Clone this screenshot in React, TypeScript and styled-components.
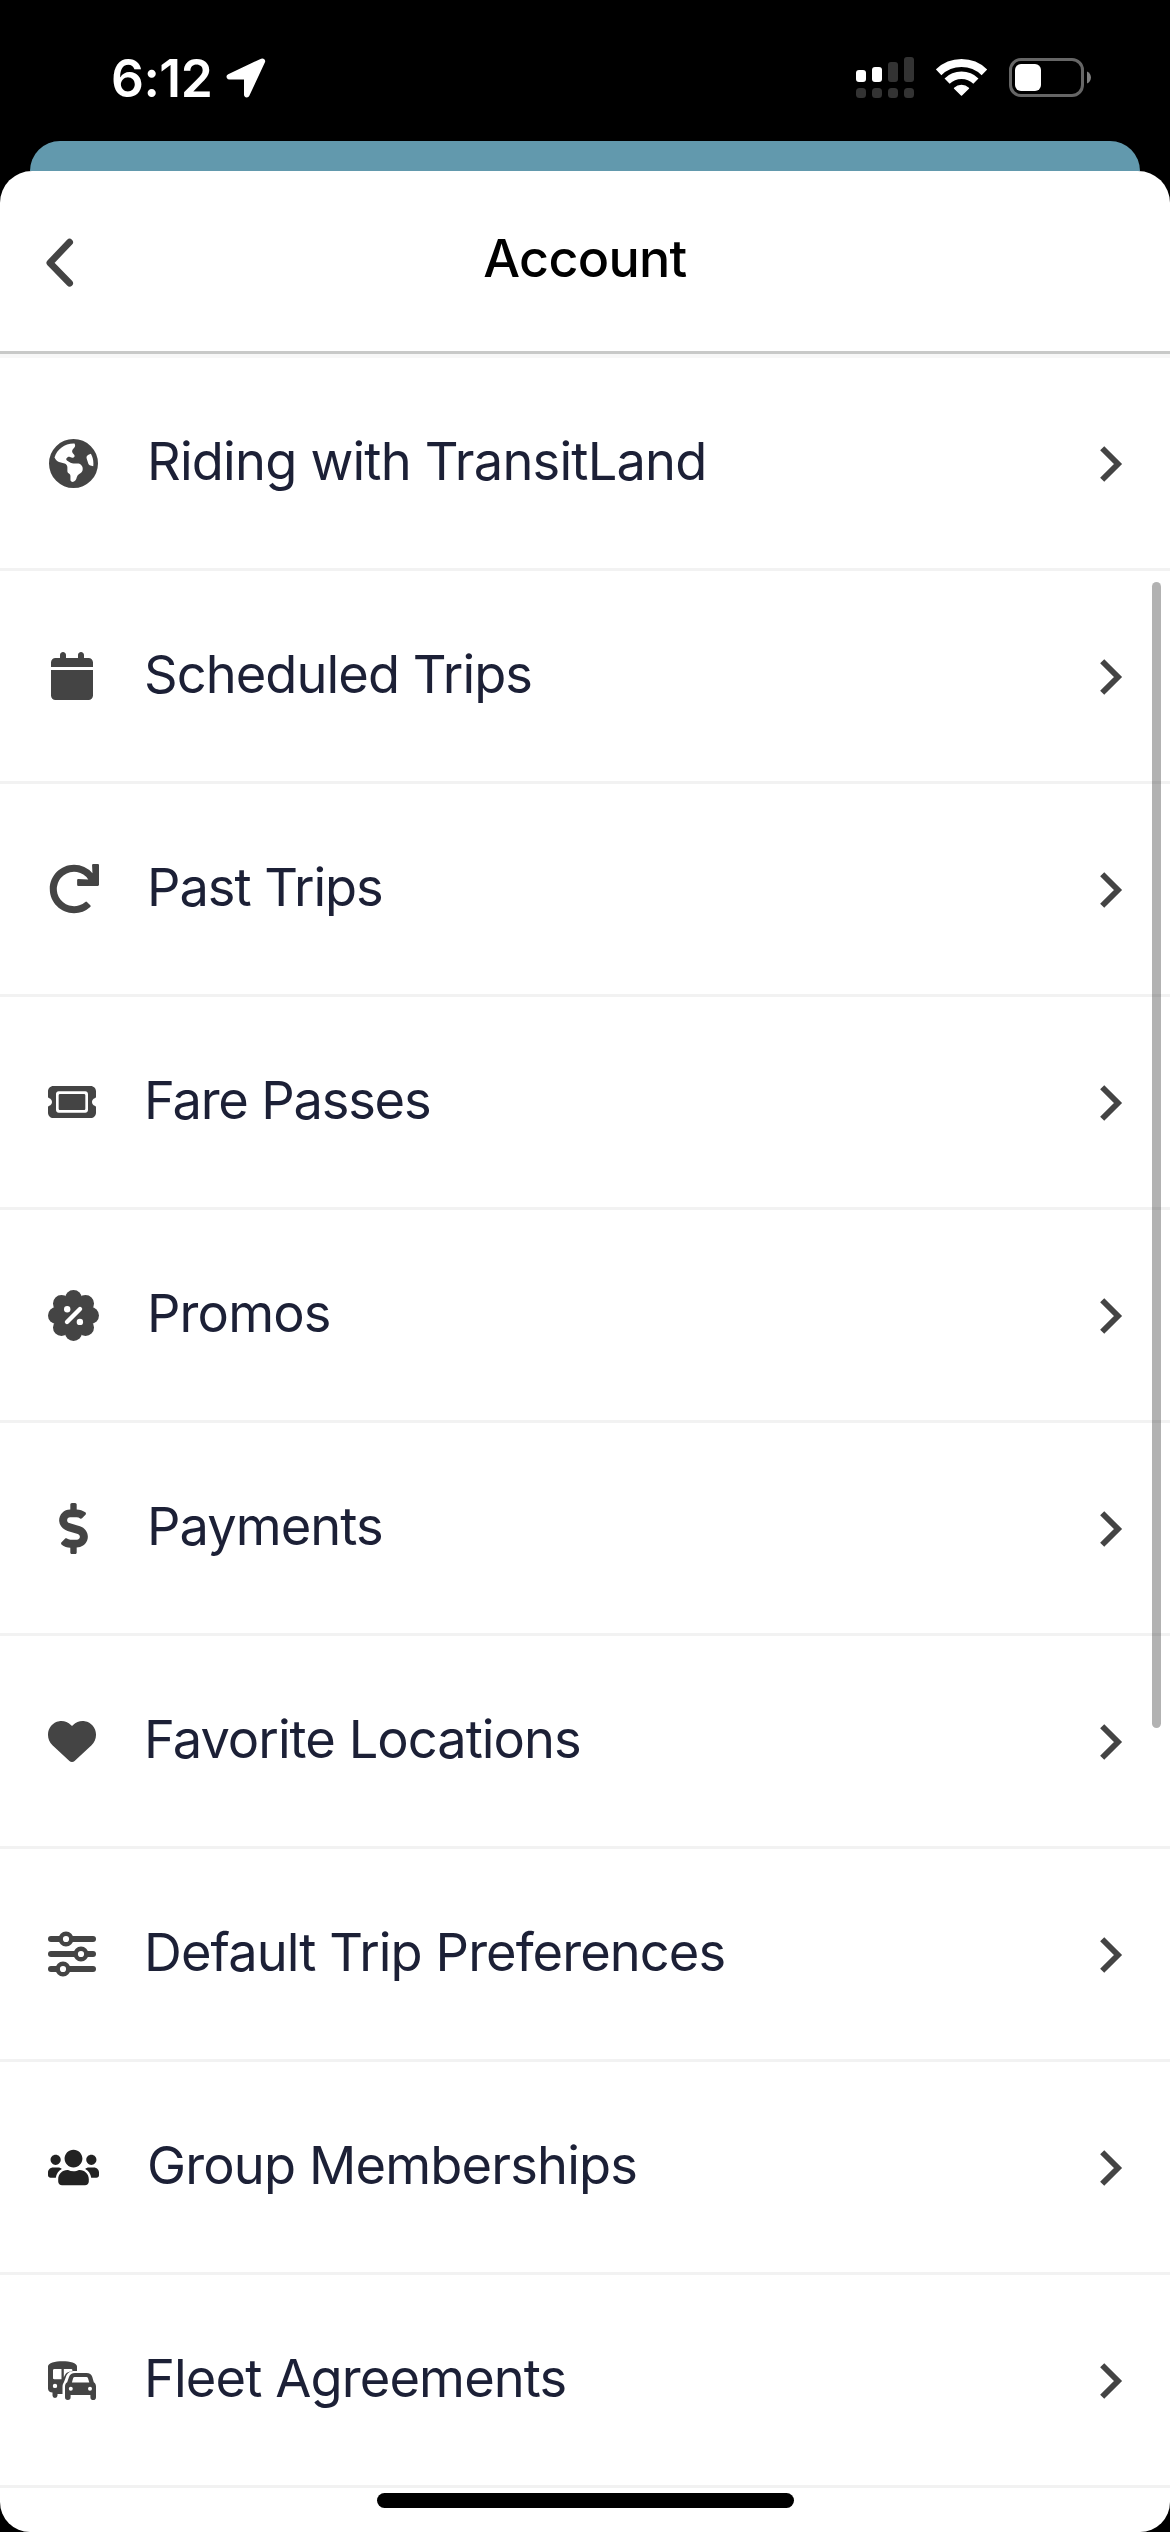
import React from "react";
import styled, { createGlobalStyle } from "styled-components";
import { FaEarthAmericas, FaCalendar, FaTicket, FaHeart } from "react-icons/fa6";
import { FaRedo, FaDollarSign, FaUsers } from "react-icons/fa";

const GlobalStyle = createGlobalStyle`
  * { box-sizing: border-box; }
  html, body { margin: 0; padding: 0; background: #000; }
  body { font-family: Inter, "Liberation Sans", sans-serif; -webkit-font-smoothing: antialiased; }
`;

const Screen = styled.div`
  position: relative;
  width: 1170px;
  height: 2532px;
  overflow: hidden;
  display: flex;
  flex-direction: column;
  background: #000;
`;

const StatusBar = styled.header`
  height: 141px;
  flex: none;
  display: flex;
  justify-content: space-between;
  align-items: flex-start;
  padding: 57px 79px 0 111px;
  color: #fff;
`;

const Clock = styled.div`
  display: flex;
  gap: 14px;
  height: 42px;
  align-items: center;
`;

const Time = styled.span`
  font-size: 51.5px;
  font-weight: 600;
  line-height: 42px;
  letter-spacing: -0.5px;
`;

const StatusIcons = styled.div`
  display: flex;
  align-items: flex-start;
`;

const SignalSlot = styled.span`
  display: flex;
  margin-right: 20px;
`;

const WifiSlot = styled.span`
  display: flex;
  padding-top: 2px;
  margin-right: 21px;
`;

const BatterySlot = styled.span`
  display: flex;
  padding-top: 1px;
`;

const BackCard = styled.div`
  height: 30px;
  flex: none;
  margin: 0 30px;
  background: #6299ad;
  border-radius: 30px 30px 0 0;
`;

const Sheet = styled.main`
  flex: 1;
  display: flex;
  flex-direction: column;
  background: #fff;
  border-radius: 32px 32px 30px 30px;
`;

const NavBar = styled.div`
  height: 183px;
  flex: none;
  display: grid;
  grid-template-columns: 120px 1fr 120px;
  align-items: center;
  border-bottom: 3px solid #c8c9c8;
`;

const BackButton = styled.button`
  border: 0;
  background: none;
  padding: 4px 0 0 45px;
  display: flex;
`;

const Title = styled.h1`
  margin: 0;
  padding-bottom: 4px;
  text-align: center;
  font-size: 52px;
  line-height: 64px;
  font-weight: 500;
  letter-spacing: -0.7px;
  color: #000;
`;

const NavShadow = styled.div`
  height: 4px;
  flex: none;
  background: #f7f7f7;
`;

const List = styled.ul`
  list-style: none;
  margin: 0;
  padding: 0;
`;

const Row = styled.li`
  height: 213px;
  display: flex;
  align-items: center;
  border-bottom: 3px solid #f2f2f2;
  padding: 0 47px 0 48px;
`;

const IconBox = styled.span<{ $wide?: boolean; $dark?: boolean }>`
  width: ${(p) => (p.$wide ? 51 : 48)}px;
  flex: none;
  display: flex;
  justify-content: center;
  margin-right: 48px;
  color: ${(p) => (p.$dark ? "#222222" : "#444444")};
`;

const Label = styled.span<{ $track: number }>`
  flex: 1;
  padding-bottom: 4px;
  font-size: 52.4px;
  line-height: 64px;
  letter-spacing: ${(p) => p.$track}px;
  color: #1c2036;
`;

const ScrollThumb = styled.div`
  position: absolute;
  right: 9px;
  top: 582px;
  width: 9px;
  height: 1146px;
  border-radius: 5px;
  background: rgba(0, 0, 0, 0.3);
`;

const HomeIndicator = styled.div`
  position: absolute;
  left: 377px;
  bottom: 24px;
  width: 417px;
  height: 15px;
  border-radius: 8px;
  background: #000;
`;

const LocationArrow = () => (
  <svg width="40" height="40" viewBox="0 0 40 40">
    <path
      d="M36.300 3.200 3.400 18.800H20.800V36.600z"
      fill="#fff"
      stroke="#fff"
      strokeWidth="5.600"
      strokeLinejoin="round"
    />
  </svg>
);

const Signal = () => (
  <svg width="60" height="42" viewBox="0 0 60 42">
    <g fill="#fff">
      <rect x="0" y="13" width="10" height="12" rx="3" />
      <rect x="16" y="10" width="10" height="15" rx="3" />
    </g>
    <g fill="#333">
      <rect x="32" y="5" width="10" height="20" rx="3" />
      <rect x="48" y="0" width="10" height="25" rx="3" />
      {[0, 16, 32, 48].map((x) => (
        <rect key={x} x={x} y="31" width="10" height="10" rx="3.5" />
      ))}
    </g>
  </svg>
);

const Wifi = () => (
  <svg width="52" height="40" viewBox="0 0 52 40">
    <g fill="none" stroke="#fff">
      <path d="M2.600 13.300A33 33 0 0 1 48.400 13.300" strokeWidth="8" />
      <path d="M11.100 22.100A20.700 20.700 0 0 1 39.900 22.100" strokeWidth="7.400" />
    </g>
    <path
      d="M25.500 36 18.600 29.200A10.500 10.500 0 0 1 32.400 29.200z"
      fill="#fff"
      stroke="#fff"
      strokeWidth="1.500"
      strokeLinejoin="round"
    />
  </svg>
);

const Battery = () => (
  <svg width="82" height="40" viewBox="0 0 82 40">
    <rect x="1.500" y="1.500" width="72" height="36" rx="10.500" fill="none" stroke="#666" strokeWidth="3" />
    <rect x="6" y="6" width="26" height="27" rx="6" fill="#fff" />
    <path d="M78 13.500c5.300 2 5.300 10 0 12z" fill="#808080" />
  </svg>
);

const BackChevron = () => (
  <svg width="30" height="50" viewBox="0 0 30 50">
    <path
      d="M24.600 4.200 4.900 24.800 24.600 45.200"
      fill="none"
      stroke="#444"
      strokeWidth="6.800"
      strokeLinecap="round"
      strokeLinejoin="round"
    />
  </svg>
);

const Chevron = () => (
  <svg width="23" height="38" viewBox="0 0 23 38">
    <path d="M2.200 4.200 18 20 2.200 35.800" fill="none" stroke="#444" strokeWidth="5.800" />
  </svg>
);

const PromoBadge = () => (
  <svg width="51" height="51" viewBox="0 0 51 51">
    <g fill="currentColor">
      <circle cx="25.500" cy="25.500" r="19" />
      {[0, 45, 90, 135, 180, 225, 270, 315].map((a) => (
        <circle key={a} cx="25.500" cy="8.500" r="8.500" transform={`rotate(${a} 25.500 25.500)`} />
      ))}
    </g>
    <path d="M19 32 32 19" stroke="#fff" strokeWidth="4.400" strokeLinecap="round" />
    <circle cx="19.200" cy="19.200" r="3.200" fill="#fff" />
    <circle cx="31.900" cy="31.900" r="3.200" fill="#fff" />
  </svg>
);

const Sliders = () => (
  <svg width="48" height="46" viewBox="0 0 48 46">
    {[
      [8, 18],
      [23, 33],
      [38, 15],
    ].map(([y, x]) => (
      <g key={y}>
        <path d={`M3 ${y}H45`} stroke="currentColor" strokeWidth="6" strokeLinecap="round" />
        <circle cx={x} cy={y} r="5.300" fill="#fff" stroke="currentColor" strokeWidth="4.400" />
      </g>
    ))}
  </svg>
);

const BusCar = () => (
  <svg width="48" height="39" viewBox="0 0 48 39">
    <path
      fill="currentColor"
      fillRule="evenodd"
      d="M0 5.500C0 2 7 .3 14.500.3S29 2 29 5.500V10h-3.500c-4.500 0-6.800 3-7.800 6.500L16 21c-1 1.500-1.500 3-1.500 5v7h-5v1.500a2.500 2.500 0 0 1-5 0V31.500C2 31.500 0 30 0 27.500zM5 9.500v7.500c0 .8.500 1.200 1.200 1.200H13.500V8H6.500C5.500 8 5 8.500 5 9.500zM15.800 8v8.500c1.200-3 2.500-5.500 7-6.300l1.700-.4C24.500 8.500 24 8 23 8zM7 22.700a2.200 2.200 0 1 0 0 4.400 2.200 2.200 0 0 0 0-4.400z"
    />
    <path
      fill="currentColor"
      fillRule="evenodd"
      d="M27 12h11.500c3 0 5 1.500 5.800 4l1.500 5.200c1.500 1 2.200 2.500 2.200 4.300v10.700a2.600 2.600 0 0 1-5.600 0V34H22.600v2.200a2.600 2.600 0 0 1-5.600 0V25.500c0-1.800.7-3.300 2.200-4.300l1.800-5.200c.9-2.500 3-4 6-4zm-.3 4c-.8 0-1.300.4-1.600 1.200L23.900 21.500h17.400L40 17.200c-.3-.8-.8-1.200-1.600-1.200zM22.800 25.700a2 2 0 1 0 0 4 2 2 0 0 0 0-4zm19.200 0a2 2 0 1 0 0 4 2 2 0 0 0 0-4z"
    />
  </svg>
);

type Item = { label: string; icon: React.ReactNode; track: number; wide?: boolean; dark?: boolean };

const items: Item[] = [
  { label: "Riding with TransitLand", icon: <FaEarthAmericas size={49} />, track: -0.8, wide: true },
  { label: "Scheduled Trips", icon: <FaCalendar size={48} />, track: -0.93 },
  { label: "Past Trips", icon: <FaRedo size={50} />, track: -1.05, wide: true },
  { label: "Fare Passes", icon: <FaTicket size={48} />, track: -1.2 },
  { label: "Promos", icon: <PromoBadge />, track: -0.85, wide: true },
  { label: "Payments", icon: <FaDollarSign size={51} />, track: -0.95, wide: true },
  { label: "Favorite Locations", icon: <FaHeart size={48} />, track: -0.96 },
  { label: "Default Trip Preferences", icon: <Sliders />, track: -0.92 },
  { label: "Group Memberships", icon: <FaUsers size={51} />, track: -0.84, wide: true, dark: true },
  { label: "Fleet Agreements", icon: <BusCar />, track: -0.88 },
];

export default function App() {
  return (
    <Screen>
      <GlobalStyle />
      <StatusBar>
        <Clock>
          <Time>6:12</Time>
          <LocationArrow />
        </Clock>
        <StatusIcons>
          <SignalSlot><Signal /></SignalSlot>
          <WifiSlot><Wifi /></WifiSlot>
          <BatterySlot><Battery /></BatterySlot>
        </StatusIcons>
      </StatusBar>
      <BackCard />
      <Sheet>
        <NavBar>
          <BackButton aria-label="Back"><BackChevron /></BackButton>
          <Title>Account</Title>
        </NavBar>
        <NavShadow />
        <List>
          {items.map((item) => (
            <Row key={item.label}>
              <IconBox $wide={item.wide} $dark={item.dark}>{item.icon}</IconBox>
              <Label $track={item.track}>{item.label}</Label>
              <Chevron />
            </Row>
          ))}
        </List>
      </Sheet>
      <ScrollThumb />
      <HomeIndicator />
    </Screen>
  );
}
